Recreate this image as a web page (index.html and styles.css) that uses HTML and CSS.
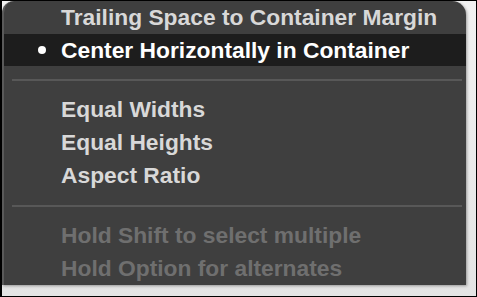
FILE: index.html
```html
<!DOCTYPE html>
<html lang="en">
<head>
  <meta charset="UTF-8" />
  <title>Constraint Menu</title>
  <link rel="stylesheet" href="styles.css">
</head>
<body>
  <div class="frame">
    <div class="menu">
      <div class="item">Trailing Space to Container Margin</div>
      <div class="item selected"><span class="dot"></span>Center Horizontally in Container</div>
      <div class="separator"></div>
      <div class="item">Equal Widths</div>
      <div class="item">Equal Heights</div>
      <div class="item">Aspect Ratio</div>
      <div class="separator"></div>
      <div class="item hint">Hold Shift to select multiple</div>
      <div class="item hint">Hold Option for alternates</div>
    </div>
  </div>
</body>
</html>
```

FILE: styles.css
```css
html, body {
  margin: 0;
  padding: 0;
}

body {
  width: 477px;
  height: 297px;
  overflow: hidden;
  background: #ffffff;
  font-family: "Liberation Sans", Arial, sans-serif;
}

.frame {
  box-sizing: border-box;
  width: 477px;
  height: 297px;
  border: 1px solid #000;
  border-left-width: 2px;
  background: linear-gradient(to bottom, #f2f2f2, #e4e4e4);
  padding: 0 10px 10px 0;
}

.menu {
  height: 284px;
  background: #3f3f3f;
  border-radius: 12px 14px 0 0;
  border-left: 2px solid #5a5a5a;
  box-shadow: 1px 1px 3px rgba(0, 0, 0, 0.35);
  overflow: hidden;
}

.item {
  position: relative;
  height: 33px;
  line-height: 33px;
  padding-left: 57px;
  font-size: 22.8px;
  font-weight: bold;
  color: #d8d8d8;
  white-space: nowrap;
}

.item.selected {
  height: 32px;
  line-height: 32px;
  background: #1d1d1d;
  color: #ffffff;
}

.dot {
  position: absolute;
  left: 34px;
  top: 12px;
  width: 8px;
  height: 8px;
  border-radius: 50%;
  background: #ffffff;
}

.item.hint {
  color: #6f6f6f;
}

.separator {
  height: 2px;
  margin: 13px 4px 12px 8px;
  background: #585858;
}
```
